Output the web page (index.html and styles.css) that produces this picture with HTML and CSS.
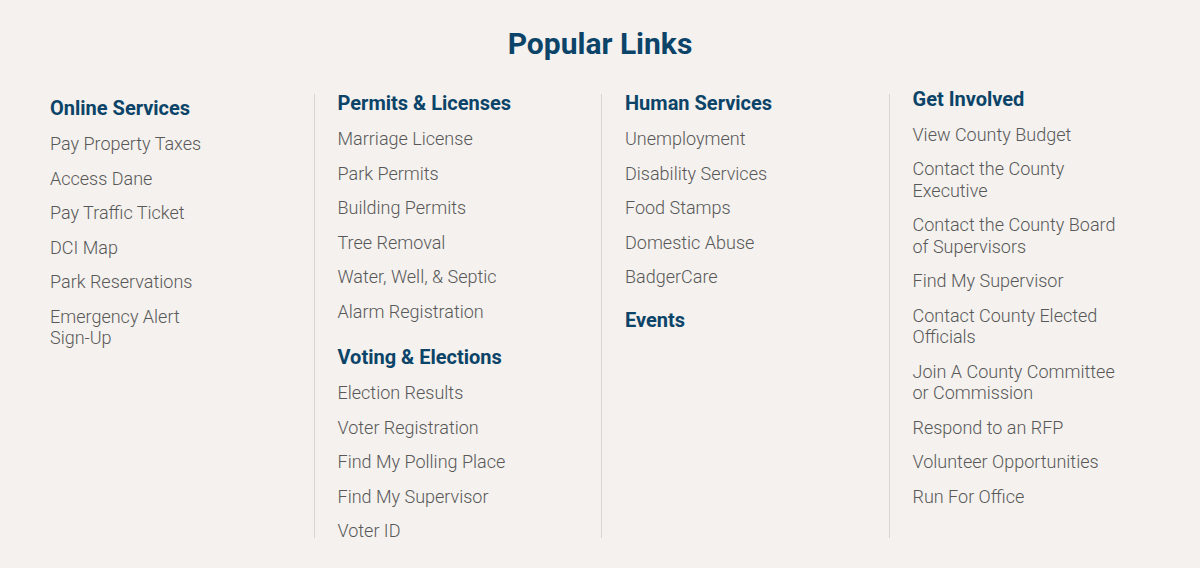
FILE: index.html
```html
<!DOCTYPE html>
<html lang="en">
<head>
<meta charset="utf-8">
<title>Popular Links</title>
<link rel="stylesheet" href="styles.css">
</head>
<body>
<section class="popular">
  <h2 class="popular-title">Popular Links</h2>
  <div class="columns">
    <div class="col col-1">
      <div class="group">
        <h3 class="group-title">Online Services</h3>
        <ul class="links narrow">
          <li><a href="#">Pay Property Taxes</a></li>
          <li><a href="#">Access Dane</a></li>
          <li><a href="#">Pay Traffic Ticket</a></li>
          <li><a href="#">DCI Map</a></li>
          <li><a href="#">Park Reservations</a></li>
          <li><a href="#">Emergency Alert <span class="nowrap">Sign-Up</span></a></li>
        </ul>
      </div>
    </div>
    <div class="col col-2">
      <div class="group">
        <h3 class="group-title">Permits &amp; Licenses</h3>
        <ul class="links">
          <li><a href="#">Marriage License</a></li>
          <li><a href="#">Park Permits</a></li>
          <li><a href="#">Building Permits</a></li>
          <li><a href="#">Tree Removal</a></li>
          <li><a href="#">Water, Well, &amp; Septic</a></li>
          <li><a href="#">Alarm Registration</a></li>
        </ul>
      </div>
      <div class="group group-next">
        <h3 class="group-title">Voting &amp; Elections</h3>
        <ul class="links">
          <li><a href="#">Election Results</a></li>
          <li><a href="#">Voter Registration</a></li>
          <li><a href="#">Find My Polling Place</a></li>
          <li><a href="#">Find My Supervisor</a></li>
          <li><a href="#">Voter ID</a></li>
        </ul>
      </div>
    </div>
    <div class="col col-3">
      <div class="group">
        <h3 class="group-title">Human Services</h3>
        <ul class="links">
          <li><a href="#">Unemployment</a></li>
          <li><a href="#">Disability Services</a></li>
          <li><a href="#">Food Stamps</a></li>
          <li><a href="#">Domestic Abuse</a></li>
          <li><a href="#">BadgerCare</a></li>
        </ul>
      </div>
      <div class="group group-events">
        <h3 class="group-title">Events</h3>
      </div>
    </div>
    <div class="col col-4">
      <div class="group">
        <h3 class="group-title">Get Involved</h3>
        <ul class="links">
          <li><a href="#">View County Budget</a></li>
          <li><a href="#">Contact the County Executive</a></li>
          <li><a href="#">Contact the County Board of Supervisors</a></li>
          <li><a href="#">Find My Supervisor</a></li>
          <li><a href="#">Contact County Elected Officials</a></li>
          <li><a href="#">Join A County Committee or Commission</a></li>
          <li><a href="#">Respond to an RFP</a></li>
          <li><a href="#">Volunteer Opportunities</a></li>
          <li><a href="#">Run For Office</a></li>
        </ul>
      </div>
    </div>
  </div>
</section>
</body>
</html>
```

FILE: styles.css
```css
html, body {
  margin: 0;
  padding: 0;
  background: #f4f1ee;
}

body {
  font-family: Roboto, "Liberation Sans", Arial, sans-serif;
  color: #585858;
}

.popular {
  padding-top: 27px;
}

.popular-title {
  margin: 0 0 33px;
  text-align: center;
  font-size: 30px;
  line-height: 34px;
  font-weight: 700;
  color: #0b4468;
}

.columns {
  display: grid;
  grid-template-columns: repeat(4, 1fr);
  padding: 0 24px 0 26px;
  height: 444px;
}

.col {
  padding-left: 23px;
  border-left: 1px solid #d9d5d1;
}

.col-1 {
  border-left-color: transparent;
}

.col-1 .group:first-child { margin-top: 2px; }
.col-2 .group:first-child { margin-top: -3px; }
.col-3 .group:first-child { margin-top: -3px; }
.col-4 .group:first-child { margin-top: -7px; }

.group-title {
  margin: 0 0 13px;
  font-size: 20px;
  line-height: 24px;
  font-weight: 700;
  color: #0b4468;
}

.col-4 .group-title {
  margin-bottom: 12.5px;
}

.group-next {
  margin-top: 23px;
}

.group-events {
  margin-top: 20px;
}

.links {
  list-style: none;
  margin: 0;
  padding: 0;
  max-width: 212px;
}

.links.narrow {
  max-width: 180px;
}

.links li {
  margin: 0 0 13px;
  font-size: 18px;
  line-height: 21.5px;
  font-weight: 300;
}

.links a {
  color: #585858;
  text-decoration: none;
}

.nowrap {
  white-space: nowrap;
}
```
